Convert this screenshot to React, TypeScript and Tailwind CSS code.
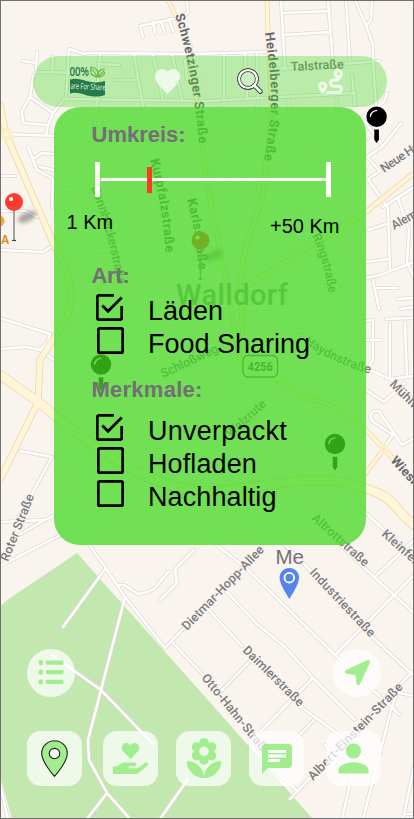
import type { ReactNode } from "react";
import { FaHandHoldingHeart, FaRoute } from "react-icons/fa";
import { MdChat, MdLocalFlorist, MdPerson } from "react-icons/md";

const streets = [
  "M187 0L188 12L183 17L140 26L143 37M153 22L155 33M161 21L165 33M169 19L173 31",
  "M37 52L36 72L33 77L30 97L53 113L48 125L46 136M30 97L22 111L23 123L46 125M53 113L64 99L207 101M23 61L36 63",
  "M69 49L66 98M69 49L84 54L88 53L190 54L266 52M100 53L95 125M36 72L98 73M98 64L119 65M134 54L146 125M117 80L138 80M153 54L163 100M172 54L182 100M53 57L52 72M185 60L187 79L200 79",
  "M0 134L60 136",
  "M281 0L285 70M282 13L330 11M282 35L331 32M328 0L333 64M346 0L350 62M355 0L366 25L373 45L373 62L376 105M372 0L371 20L366 26M276 69L380 61M352 75L355 105M362 118L383 146L401 123",
  "M224 54L224 100M245 54L247 100M257 54L258 98M207 101L355 93",
  "M387 93L384 102L362 118M383 146L367 157L380 171L368 179L388 208L390 270M383 207L414 187M398 198L409 230L407 262L414 278M368 230L387 224M356 267L365 262L390 259",
  "M28 147L37 170L52 178M33 159L42 153L54 154M40 167L54 170M0 176L15 176M0 211L25 211L37 217M53 180L52 208M0 250L43 252L54 245",
  "M366 278L380 275L414 262M373 280L379 309M374 288L398 288M397 299L414 298M400 309L414 307M386 319L414 318M360 322L373 320L373 360L368 368M357 340L381 340M390 324L390 377M405 323L407 375",
  "M366 368L390 379L414 376M390 379L414 400M366 390L384 402L405 383M393 435L372 421L370 415L374 411L379 411L402 445L414 438M393 435L384 448M350 498L414 558",
  "M0 318L50 334L48 342L40 350L27 347L0 349M40 350L54 360",
  "M20 451L52 457L15 525M0 522L45 520L15 537M45 520L75 505M0 566L80 525L120 500M80 525L90 538L90 546L105 567L125 597L165 648L207 604",
  "M105 569L63 627M118 585L124 585L138 594L148 592L155 588L169 571M160 600L177 583L175 569L194 550M172 642L205 677",
  "M125 597L101 690L88 740L89 760L107 793L130 819M52 655L101 690L153 744M107 793L87 819M188 779L160 819",
  "M210 540L246 568L335 655L400 715M223 588L257 624L285 647L313 678L355 720M285 545L310 570L370 635L414 676M335 655L414 575M330 535L375 578L414 613M376 576L414 540M313 678L260 732M252 659L220 692M207 608L242 646",
  "M412 672L380 705L290 799M395 692L414 696M314 720L280 755M298 705L370 757M325 745L351 779L342 819M397 692L391 710L363 819M250 745L297 791M414 767L403 819M405 814L414 814M0 784L8 819",
];

const centreStreets = [
  "M75 115L95 120L180 120M288 98L292 127M336 95L340 130M219 103L219 118L255 119L258 102M270 130L350 126L366 140",
  "M58 182L66 190L88 182M56 150L72 140L72 120M124 182L124 225L110 245L92 248M55 245L70 232L74 255L54 245M70 255L200 255M91 182L95 220L90 270M150 140L168 245L195 300M100 270L95 335L60 350",
  "M207 173L240 170L270 178L300 205L330 240M236 153L236 171M244 158L244 190M229 171L227 201L207 203M207 218L258 214L340 150M298 214L366 170M280 145L310 190M207 249L257 247L280 275M257 247L266 262L300 245M308 260L306 335L330 345M340 255L350 330",
  "M118 297L140 330L190 318L230 290L340 285M135 340L160 325L260 312L340 310M284 290L288 330L340 332M336 280L342 345L320 380L300 400M125 360L140 378L175 370L225 355L229 385L245 385M250 358L340 395M270 360L300 335M337 405L365 375M207 415L280 381M166 417L205 455L250 409M280 400L325 455M175 440L220 460M300 495L295 510L235 575M250 515L290 550M163 495L207 480M52 457L83 461M82 450L83 480L100 500M54 360L100 382",
];

const highways = [
  { d: "M168 0L190 45L200 130L208 190L226 280L240 360L305 397", w: 4.6 },
  { d: "M267 0L268 33L272 110L262 200L246 245L240 280L243 345", w: 5 },
  { d: "M0 105L6 134L54 245C70 275 75 290 68 315L54 338L40 360L38 402L0 480", w: 7 },
  { d: "M0 375L40 403L54 415C110 460 150 485 195 490S300 472 350 484S390 507 414 525", w: 10 },
  { d: "M207 310L366 212L414 173", w: 5.5 },
  { d: "M260 365L305 397L330 405L366 430L384 449L414 480M384 449L355 487", w: 5 },
];

type Label = { t: string; d: string; len: number; bold?: boolean };
const labels: Label[] = [
  { t: "Schwetzinger Straße", d: "M175 15Q194 75 199 147", len: 131, bold: true },
  { t: "Heidelberger Straße", d: "M265 33C269 60 273 95 270 120S266 150 263 165", len: 128, bold: true },
  { t: "Talstraße", d: "M291 71L350 68", len: 53 },
  { t: "Kurpfalzstraße", d: "M150 160Q163 205 166 260", len: 94, bold: true },
  { t: "Karlsstraße", d: "M187 200Q196 230 199 276", len: 71, bold: true },
  { t: "Bannheckerstraße", d: "M91 188Q108 230 120 296", len: 101 },
  { t: "Ringstraße", d: "M312 236Q325 262 330 302", len: 60 },
  { t: "Schloßweg", d: "M163 378L227 348", len: 62 },
  { t: "Haydnstraße", d: "M304 343Q335 365 378 376", len: 73 },
  { t: "Walzrute", d: "M231 438L274 398", len: 49 },
  { t: "Neue Heimat", d: "M384 173L440 135", len: 66 },
  { t: "Alemannenweg", d: "M394 230L472 186", len: 82 },
  { t: "Mühlweg", d: "M389 385L431 427", len: 52 },
  { t: "Wieslocher Str.", d: "M390 461L453 529", len: 90, bold: true },
  { t: "Kleinfeldweg", d: "M381 535L442 590", len: 75 },
  { t: "Altrottstraße", d: "M311 519L370 572", len: 72 },
  { t: "Industriestraße", d: "M309 573L376 644", len: 89 },
  { t: "Dietmar-Hopp-Allee", d: "M187 631L270 545", len: 112 },
  { t: "Daimlerstraße", d: "M242 651L306 714", len: 80 },
  { t: "Otto-Hahn-Straße", d: "M201 678L272 765", len: 102 },
  { t: "Albert-Einstein-Straße", d: "M313 781L408 683", len: 130 },
  { t: "Roter Straße", d: "M8 562L38 487", len: 71 },
];

function BlackPin({ x, y }: { x: number; y: number }) {
  return (
    <g transform={`translate(${x} ${y})`}>
      <circle r="10.2" fill="#000" />
      <path d="M-6.2 -.5A6.2 6.2 0 0 1 0 -6.2" fill="none" stroke="#fff" strokeWidth="1.3" strokeLinecap="round" />
      <path d="M-2.3 12.8H2.3V23L0 26.2L-2.3 23Z" fill="#000" />
    </g>
  );
}

function RedPin({ x, y }: { x: number; y: number }) {
  return (
    <g transform={`translate(${x} ${y})`}>
      <ellipse cx="13" cy="15" rx="10" ry="4.5" transform="rotate(-25 13 15)" fill="#555" opacity=".5" filter="url(#pinShadow)" />
      <path d="M0 8V38" stroke="#8d8d92" strokeWidth="1.6" />
      <path d="M-2 38.5H2" stroke="#444" strokeWidth="1.2" />
      <circle r="9" fill="#ff3b30" />
      <circle cx="-3" cy="-3" r="2.1" fill="#fff" />
    </g>
  );
}

function CityMap() {
  return (
    <svg className="absolute inset-0 h-full w-full" viewBox="1 1 412 817" preserveAspectRatio="none">
      <defs>
        <filter id="pinShadow" x="-50%" y="-100%" width="200%" height="300%">
          <feGaussianBlur stdDeviation="2" />
        </filter>
      </defs>
      <rect width="414" height="819" fill="#f9f4ed" />
      <path d="M0 606L10 598L77 553L207 699L313 819H12L0 775Z" fill="#c2e8b0" />
      <g fill="none" strokeLinecap="round" strokeLinejoin="round">
        {centreStreets.map((d) => <path key={d} d={d} stroke="#e6e0d8" strokeWidth="4" />)}
        {centreStreets.map((d) => <path key={d} d={d} stroke="#f9f6f0" strokeWidth="2.6" />)}
        {streets.map((d) => <path key={d} d={d} stroke="#dfd9d2" strokeWidth="4" />)}
        {streets.map((d) => <path key={d} d={d} stroke="#fff" strokeWidth="2.5" />)}
        {highways.map(({ d, w }) => <path key={d} d={d} stroke="#f6d3a6" strokeWidth={w} />)}
        {highways.map(({ d, w }) => <path key={d} d={d} stroke="#fef6d8" strokeWidth={w - 1.6} />)}
        <circle cx="6" cy="134" r="4.5" stroke="#fbeec0" strokeWidth="4" fill="#f9f4ed" />
        <circle cx="384" cy="449" r="3" stroke="#fdf0c8" strokeWidth="4" fill="#f9d7a8" />
        <circle cx="305" cy="397" r="2.5" stroke="#fdf0c8" strokeWidth="3" fill="#f9d7a8" />
      </g>
      <g stroke="#f9f4ed" strokeWidth="1.6" paintOrder="stroke" strokeLinejoin="round" fontFamily="Roboto, sans-serif">
        {labels.map(({ t, d, len, bold }, i) => (
          <g key={t}>
            <path id={`street-${i}`} d={d} fill="none" stroke="none" />
            <text fontSize={bold ? 13 : 12.5} fontWeight={bold ? 700 : 500} fill={bold ? "#69696d" : "#7b7b7f"} textLength={len}>
              <textPath href={`#street-${i}`} textLength={len}>{t}</textPath>
            </text>
          </g>
        ))}
        <text x="176" y="304.5" fontSize="29" fontWeight="500" textLength="112" stroke="none" fill="#8e8e8e">Walldorf</text>
      </g>
      <rect x="243" y="355.5" width="34.5" height="21.5" rx="5" fill="#f5f5f0" stroke="#666" strokeWidth="1.4" />
      <text x="260.2" y="370.7" textAnchor="middle" fontFamily="Roboto, sans-serif" fontWeight="700" fontSize="12.5" textLength="25" lengthAdjust="spacingAndGlyphs" fill="#555">4256</text>
      <circle cx="-1" cy="221" r="5.5" fill="#f7a535" />
      <text x="1" y="244" fontFamily="Inter, sans-serif" fontWeight="600" fontSize="11.5" fill="#e08b1c">A</text>
      <RedPin x={14} y={202} />
      <RedPin x={200.5} y={240.5} />
      <BlackPin x={376.6} y={116.8} />
      <BlackPin x={101} y={364.5} />
      <BlackPin x={335} y={444} />
      <text x="275.5" y="563.5" fontFamily="Liberation Sans, Arial, sans-serif" fontSize="20.5" fill="#747076">Me</text>
      <path d="M289.3 568C284 568 279.6 572.2 279.6 577.5C279.6 585 289.3 598.8 289.3 598.8S299 585 299 577.5C299 572.2 294.6 568 289.3 568Z" fill="#5683ec" />
      <circle cx="289.3" cy="577.7" r="4.8" fill="none" stroke="#fff" strokeWidth="1.8" />
    </svg>
  );
}

function CheckRow({ label, checked, shift = "", tracking = "" }: { label: string; checked?: boolean; shift?: string; tracking?: string }) {
  return (
    <div className="flex h-[33px] items-start">
      <svg viewBox="3 3 18 18" className={`h-[27px] w-[27px] shrink-0 ${checked ? "ml-[5px]" : "ml-[5.5px]"} ${shift}`}>
        {checked ? (
          <path d="M19 19.2H4.8V4.8H15V3H5C3.89 3 3 3.89 3 5V19A2 2 0 0 0 5 21H19A2 2 0 0 0 21 19V11H19.2V19.2M7.91 10.08L6.6 11.4L11 15.8L20.8 6L19.5 4.7L11 13.17Z" />
        ) : (
          <rect x="3.9" y="3.9" width="16.2" height="16.2" rx="1" fill="none" stroke="#000" strokeWidth="1.8" />
        )}
      </svg>
      <span className={`${checked ? "ml-[25px]" : "ml-[24.5px]"} whitespace-nowrap text-[27px] leading-[33px] text-black ${tracking}`}>{label}</span>
    </div>
  );
}

function Heading({ children, tracking = "" }: { children: ReactNode; tracking?: string }) {
  return <h2 className={`text-[22px] leading-[22px] font-bold text-[#736f75] ${tracking}`}>{children}</h2>;
}

function RangeSlider() {
  return (
    <div className="mt-4 ml-[3px] flex h-[35px] w-[236.4px] items-center">
      <i className="h-[35px] w-[5px] bg-[#fcf9f2]" />
      <i className="ml-px h-[3px] w-[46.6px] bg-white" />
      <i className="h-[26px] w-[5px] bg-[#fb3b24]" />
      <i className="h-[3px] flex-1 bg-white" />
      <i className="h-[35px] w-[5px] bg-white" />
    </div>
  );
}

function FilterPanel() {
  return (
    <section className="ml-[53px] flex h-[438px] w-[312px] flex-col rounded-[26px] bg-[#43d922]/75 pt-[17px] pl-[37.5px]">
      <Heading>Umkreis:</Heading>
      <RangeSlider />
      <div className="mt-[15px] -ml-[25px] flex h-[27px] w-[273px] justify-between text-[20px] leading-[20px] text-black">
        <span>1 Km</span>
        <span className="mt-1">+50 Km</span>
      </div>
      <div className="mt-[26px]"><Heading tracking="tracking-[-0.3px]">Art:</Heading></div>
      <div className="mt-[8px] -ml-[0.5px]">
        <CheckRow label="Läden" checked shift="-mt-px" />
        <CheckRow label="Food Sharing" shift="-mt-[1.5px]" />
      </div>
      <div className="mt-[18px]"><Heading tracking="tracking-[0.25px]">Merkmale:</Heading></div>
      <div className="mt-[14px] -ml-[0.5px]">
        <CheckRow label="Unverpackt" checked shift="-mt-px" tracking="tracking-[0.25px]" />
        <CheckRow label="Hofladen" shift="-mt-px" tracking="tracking-[0.1px]" />
        <CheckRow label="Nachhaltig" shift="-mt-[1.5px]" tracking="tracking-[0.1px]" />
      </div>
    </section>
  );
}

function ShareLogo() {
  return (
    <svg viewBox="0 0 35 32" className="h-8 w-[35px]">
      <text x="-.5" y="10.8" textLength="19.5" lengthAdjust="spacingAndGlyphs" fontFamily="Open Sans, sans-serif" fontSize="13" fontWeight="600" fill="#247547">00%</text>
      <g fill="none" stroke="#63b83f" strokeWidth="1.2">
        <path d="M28 12C20 11 20 6 21 2C27 3 29 6 28 12ZM22 4L28 12" />
        <path d="M28 12C27 6 31 4 35 4M28 12C32 12 34 10 35 7M28 12L34 6" />
      </g>
      <path d="M0 14.5C8 12 14 16 21 17C27 18 31 17 35 16V30C29 32 24 32 17 30.5C10 28 6 27 0 28.5Z" fill="#257a4a" />
      <text x=".5" y="24.5" transform="rotate(3 17 22)" textLength="35" lengthAdjust="spacingAndGlyphs" fontFamily="Open Sans, sans-serif" fontSize="8.5" fill="#e4f2e8">are For Share</text>
    </svg>
  );
}

function Toolbar() {
  return (
    <header className="mt-[55px] ml-8 flex h-[51px] w-[354px] items-start rounded-full bg-[#43d922]/34 pl-[37px]">
      <div className="mt-[9px]"><ShareLogo /></div>
      <svg viewBox="2 3 20 18.35" preserveAspectRatio="none" className="mt-[13px] ml-[50px] h-[25px] w-[25px] fill-white/75">
        <path d="M12 21.35l-1.45-1.32C5.4 15.36 2 12.28 2 8.5 2 5.42 4.42 3 7.5 3c1.74 0 3.41.81 4.5 2.09C13.09 3.81 14.76 3 16.5 3 19.58 3 22 5.42 22 8.5c0 3.78-3.4 6.86-8.55 11.54L12 21.35z" />
      </svg>
      <svg viewBox="0 0 28 28" className="mt-[11px] ml-[56px] h-7 w-7">
        <path d="M18.5 18.5L24.3 24.5" stroke="#222" strokeWidth="4.6" strokeLinecap="round" />
        <circle cx="12" cy="12" r="8.9" fill="none" stroke="#222" strokeWidth="3.8" />
        <path d="M18.4 18.4L24.3 24.5" stroke="#f4faf0" strokeWidth="2.9" strokeLinecap="round" />
        <circle cx="12" cy="12" r="8.9" fill="none" stroke="#f4faf0" strokeWidth="2.4" />
        <circle cx="12" cy="12" r="7" fill="#fff" opacity=".3" />
      </svg>
      <FaRoute className="mt-[13px] ml-[54px] h-[25px] w-[25px] text-white/75" />
    </header>
  );
}

function NavButton({ children, className = "" }: { children: ReactNode; className?: string }) {
  return (
    <button className={`flex h-[55px] w-[55px] shrink-0 items-center justify-center rounded-[14px] bg-white/73 text-[#a2ee8e] ${className}`}>
      {children}
    </button>
  );
}

function RoundButton({ children }: { children: ReactNode }) {
  return <button className="h-12 w-12 rounded-full bg-white/73 text-[#a2ee8e]">{children}</button>;
}

export default function App() {
  return (
    <div className="relative h-[819px] w-[414px] overflow-hidden border border-[#706f72] font-['Liberation_Sans',Arial,sans-serif]">
      <CityMap />
      <main className="relative flex h-full flex-col">
        <Toolbar />
        <FilterPanel />
        <div className="mt-auto flex justify-between pr-8 pl-[26px]">
          <RoundButton>
            <svg viewBox="0 0 48 48" fill="currentColor">
              {[11, 20.5, 30.2].map((y) => (
                <g key={y}>
                  <rect x="11.5" y={y} width="4.5" height="5.2" rx="2.2" />
                  <rect x="19" y={y + 0.5} width="17.5" height="4.2" rx="1" />
                </g>
              ))}
            </svg>
          </RoundButton>
          <RoundButton>
            <svg viewBox="0 0 48 48" fill="currentColor" stroke="currentColor" strokeWidth="4" strokeLinejoin="round">
              <path d="M35 13L25.3 34L24.4 24.4L14 22.7Z" />
            </svg>
          </RoundButton>
        </div>
        <nav className="mt-[34px] flex gap-[18px] pb-8 pl-[26px]">
          <NavButton>
            <svg viewBox="4.6 1.6 14.8 20.8" className="h-[37px] w-[27px]" preserveAspectRatio="none" stroke="#1d1d1d" strokeWidth=".6">
              <path fill="#a2ee8e" d="M12 2C8.13 2 5 5.13 5 9c0 5.25 7 13 7 13s7-7.75 7-13c0-3.87-3.13-7-7-7z" />
              <circle cx="12" cy="9.2" r="2.9" fill="#f1f9ed" />
            </svg>
          </NavButton>
          <NavButton className="ml-[3px]"><FaHandHoldingHeart className="h-[35px] w-[35px]" /></NavButton>
          <NavButton><MdLocalFlorist className="h-[46px] w-[46px]" /></NavButton>
          <NavButton>
            <span className="flex bg-[linear-gradient(white,white)] bg-[length:20px_13px] bg-[position:8px_8px] bg-no-repeat">
              <MdChat className="h-9 w-9" />
            </span>
          </NavButton>
          <NavButton className="ml-1"><MdPerson className="h-[45px] w-[45px]" /></NavButton>
        </nav>
      </main>
    </div>
  );
}
